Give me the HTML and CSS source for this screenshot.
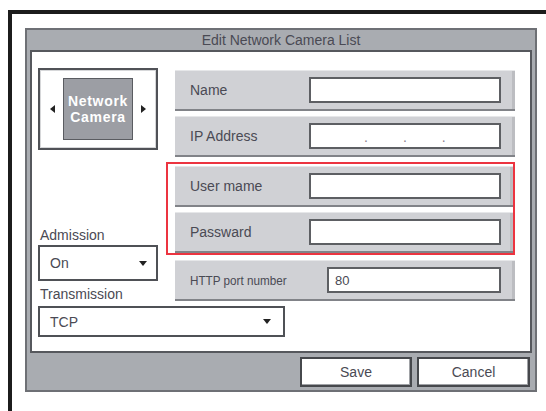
FILE: index.html
```
<!DOCTYPE html>
<html>
<head>
<meta charset="utf-8">
<title>Edit Network Camera List</title>
<link rel="stylesheet" href="styles.css">
</head>
<body>
<div class="frame">
  <div class="dialog">
    <div class="title">Edit Network Camera List</div>
    <div class="panel">
      <div class="left">
        <div class="cam-box">
          <span class="arrow arrow-l"></span>
          <div class="cam"><span>Network</span><span>Camera</span></div>
          <span class="arrow arrow-r"></span>
        </div>
        <div class="label label-admission">Admission</div>
        <div class="select select-on"><span>On</span><span class="caret"></span></div>
        <div class="label label-transmission">Transmission</div>
        <div class="select select-tcp"><span>TCP</span><span class="caret"></span></div>
      </div>
      <div class="right">
        <div class="row"><span class="row-label">Name</span><div class="field"></div></div>
        <div class="row"><span class="row-label">IP Address</span><div class="field field-ip"><span>.</span><span>.</span><span>.</span></div></div>
        <div class="highlight">
          <div class="row"><span class="row-label">User mame</span><div class="field"></div></div>
          <div class="row"><span class="row-label">Passward</span><div class="field"></div></div>
        </div>
        <div class="row"><span class="row-label row-label-small">HTTP port number</span><div class="field field-port">80</div></div>
      </div>
    </div>
    <div class="footer">
      <button class="btn btn-save">Save</button>
      <button class="btn btn-cancel">Cancel</button>
    </div>
  </div>
</div>
</body>
</html>
```
FILE: styles.css
```
html, body {
  margin: 0;
  background: #fff;
}
body {
  width: 546px;
  height: 411px;
  overflow: hidden;
  font-family: "Liberation Sans", Arial, sans-serif;
  color: #4a4a54;
}

/* outer black frame (top and left edges) */
.frame {
  margin: 10px 0 0 8px;
  height: 401px;
  box-sizing: border-box;
  border-top: 4px solid #1c1c1c;
  border-left: 4px solid #1c1c1c;
  padding: 14px 0 0 13px;
}

.dialog {
  width: 512px;
  height: 364px;
  box-sizing: border-box;
  border: 2px solid #6e7075;
  background: #a9acb1;
}

.title {
  height: 20px;
  line-height: 20px;
  text-align: center;
  font-size: 14px;
}

.panel {
  margin: 0 3px;
  height: 303px;
  box-sizing: border-box;
  border: 2px solid #56585d;
  background: #fff;
  display: flex;
  align-items: flex-start;
  padding: 16px 0 0 6px;
}

/* left column */
.left {
  width: 120px;
  flex: none;
  display: flex;
  flex-direction: column;
}

.cam-box {
  width: 120px;
  height: 82px;
  box-sizing: border-box;
  border: 2px solid #505257;
  box-shadow: inset 0 0 0 1px #d6d7d9;
  display: flex;
  align-items: center;
  justify-content: center;
  gap: 8px;
}

.cam {
  width: 70px;
  height: 62px;
  box-sizing: border-box;
  background: #9c9ea4;
  border: 1px solid #5a5c61;
  color: #fff;
  font-weight: bold;
  font-size: 14px;
  letter-spacing: 0.7px;
  text-align: center;
  display: flex;
  flex-direction: column;
  align-items: center;
  justify-content: center;
}
.cam span {
  display: block;
  line-height: 16px;
}

.arrow {
  width: 0;
  height: 0;
  border-top: 4px solid transparent;
  border-bottom: 4px solid transparent;
}
.arrow-l { border-right: 5px solid #222; }
.arrow-r { border-left: 5px solid #222; }

.label {
  font-size: 14px;
  line-height: 18px;
  margin-left: 2px;
}
.label-admission { margin-top: 76px; }
.label-transmission { margin-top: 4px; }

.select {
  box-sizing: border-box;
  border: 2px solid #4f5156;
  background: #fff;
  display: flex;
  align-items: center;
  justify-content: space-between;
  padding: 0 9px 0 10px;
  font-size: 14px;
}
.select-on {
  margin-top: 1px;
  width: 120px;
  height: 36px;
}
.select-tcp {
  margin-top: 3px;
  width: 247px;
  height: 31px;
  padding-right: 12px;
}

.caret {
  width: 0;
  height: 0;
  border-top: 5px solid #222;
  border-left: 4px solid transparent;
  border-right: 4px solid transparent;
}

/* right column: labelled fields */
.right {
  margin-left: 17px;
  margin-top: 2px;
  width: 340px;
  flex: none;
}

.row {
  height: 41px;
  box-sizing: border-box;
  background: #d0d1d5;
  border-top: 1px solid #e6e7e9;
  border-bottom: 2px solid #818388;
  box-shadow: inset -3px 0 0 #bcbdc1;
  display: flex;
  align-items: center;
  padding-left: 15px;
  margin-bottom: 5px;
}

.row-label {
  font-size: 14px;
}
.row-label-small {
  display: inline-block;
  font-size: 13px;
  transform: scaleX(0.9);
  transform-origin: left center;
}

.field {
  margin-left: auto;
  margin-right: 14px;
  width: 192px;
  height: 26px;
  box-sizing: border-box;
  border: 2px solid #5d5f63;
  background: #fff;
  font-size: 13px;
}

.field-ip {
  display: flex;
  align-items: center;
  gap: 35px;
  padding: 2px 0 0 53px;
  color: #8d7f90;
  font-size: 14px;
}

.field-port {
  width: 174px;
  display: flex;
  align-items: center;
  padding-left: 6px;
}

/* highlighted credential rows */
.highlight {
  margin-left: -9px;
  padding: 2px 0 0 7px;
  border: 2px solid #ec3440;
  margin-bottom: 5px;
}
.highlight .row:last-child { margin-bottom: 0; }
.highlight .field { margin-right: 12px; }

/* footer buttons */
.footer {
  display: flex;
  justify-content: flex-end;
  gap: 5px;
  padding: 4px 5px 0 0;
}

.btn {
  height: 30px;
  box-sizing: border-box;
  background: #fff;
  border: 2px solid #46484c;
  box-shadow: inset -1px -1px 0 #a0a2a6;
  font-family: inherit;
  font-size: 14px;
  color: #4a4a54;
  padding: 0;
}
.btn-save { width: 112px; }
.btn-cancel { width: 113px; }
```
